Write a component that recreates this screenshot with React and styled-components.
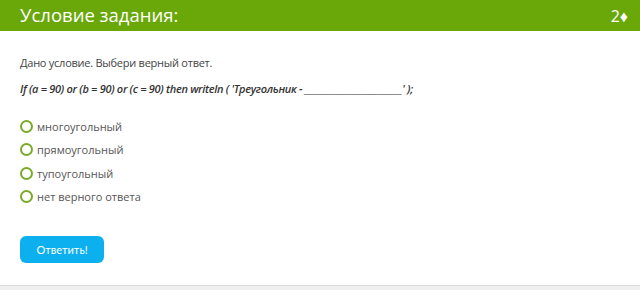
import React from "react";
import styled, { createGlobalStyle } from "styled-components";

const GlobalStyle = createGlobalStyle`
  body {
    margin: 0;
    background: #fff;
    font-family: "Open Sans", "Liberation Sans", sans-serif;
  }
`;

const Card = styled.div`
  width: 640px;
  height: 285px;
  border-bottom: 1px solid #d9d9d9;
  background: #fff;
`;

const Footer = styled.div`
  height: 4px;
  background: #f0f0f0;
`;

const Header = styled.div`
  height: 31px;
  background: #6aa80a;
  display: flex;
  align-items: center;
  justify-content: space-between;
  padding: 0 12px 0 20px;
  color: #fff;
`;

const Title = styled.h1`
  margin: 0;
  font-size: 18.5px;
  font-weight: 400;
  line-height: 1;
`;

const Points = styled.span`
  font-size: 16px;
  line-height: 1;
`;

const Body = styled.div`
  padding: 23px 20px 0;
  color: #444;
`;

const Lead = styled.p`
  margin: 0;
  font-size: 11px;
  letter-spacing: -0.25px;
  line-height: 17px;
`;

const Code = styled.p`
  margin: 9px 0 0;
  font-size: 11px;
  line-height: 17px;
  letter-spacing: -0.3px;
  font-style: italic;
  font-weight: 600;
  color: #333;
`;

const Options = styled.ul`
  list-style: none;
  margin: 21px 0 0;
  padding: 0;
  display: flex;
  flex-direction: column;
  gap: 6.3px;
`;

const Option = styled.li`
  display: flex;
  align-items: center;
  height: 17px;
  font-size: 11px;
  color: #555;
`;

const Radio = styled.span`
  width: 13px;
  height: 13px;
  box-sizing: border-box;
  border: 2px solid #7aaa28;
  border-radius: 50%;
  margin-right: 4px;
  flex-shrink: 0;
`;

const SubmitButton = styled.button`
  margin-top: 31px;
  width: 84px;
  height: 27px;
  border: none;
  border-radius: 6px;
  background: #0db0ee;
  color: #fff;
  font-family: Lato, "Liberation Sans", sans-serif;
  font-size: 11px;
  cursor: pointer;
`;

const answers = [
  "многоугольный",
  "прямоугольный",
  "тупоугольный",
  "нет верного ответа",
];

export default function App() {
  return (
    <>
      <GlobalStyle />
      <Card>
        <Header>
          <Title>Условие задания:</Title>
          <Points>2♦</Points>
        </Header>
        <Body>
          <Lead>Дано условие. Выбери верный ответ.</Lead>
          <Code>
            If (a = 90) or (b = 90) or (c = 90) then writeln ( 'Треугольник -
            ________________________' );
          </Code>
          <Options>
            {answers.map((a) => (
              <Option key={a}>
                <Radio />
                {a}
              </Option>
            ))}
          </Options>
          <SubmitButton>Ответить!</SubmitButton>
        </Body>
      </Card>
      <Footer />
    </>
  );
}
